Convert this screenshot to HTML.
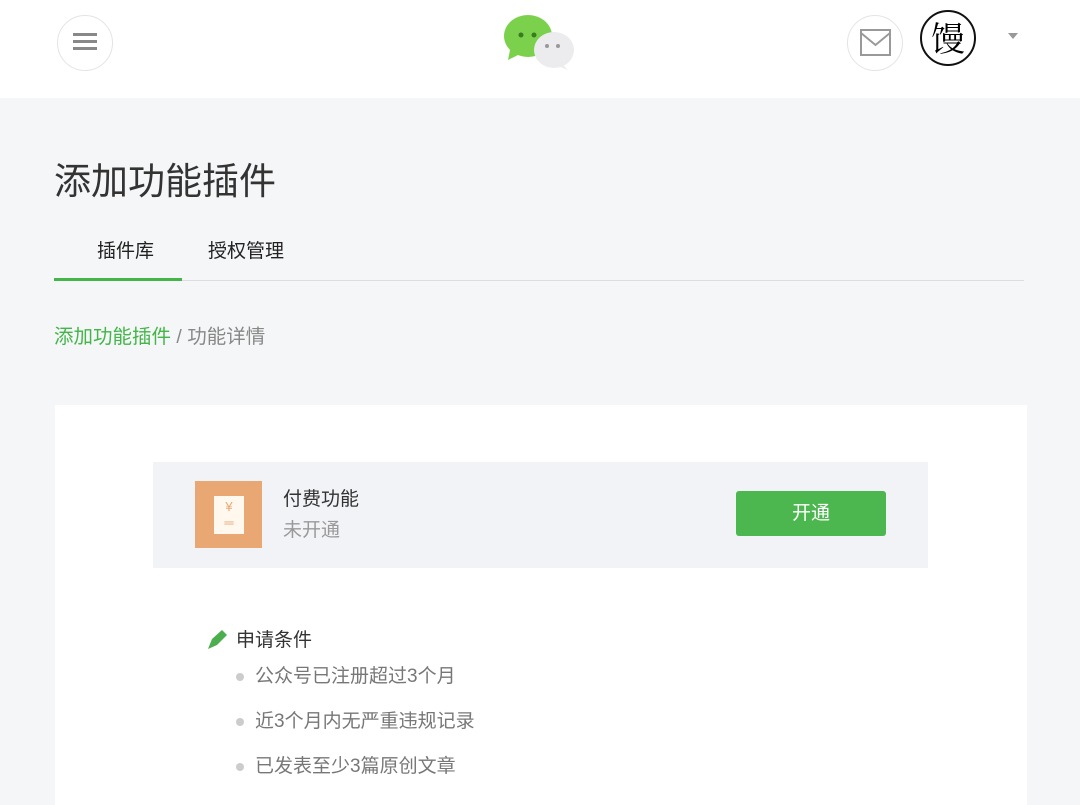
<!DOCTYPE html>
<html><head><meta charset="utf-8"><style>
*{margin:0;padding:0;box-sizing:border-box}
body{width:1080px;height:800px;overflow:hidden;background:#f5f6f7;font-family:"Liberation Sans","Noto Sans CJK SC",sans-serif;position:relative}
.a{position:absolute}
.hdr{left:0;top:0;width:1080px;height:98px;background:#fff}
.circ{border:1px solid #e4e4e4;border-radius:50%;background:#fff}
.b{display:inline-block;width:8px;height:8px;border-radius:50%;background:#ccc;margin-right:11px;vertical-align:middle}
</style></head><body>
<div class="a hdr"></div>
<div class="a circ" style="left:57px;top:15px;width:56px;height:56px"></div>
<div class="a" style="left:73px;top:33px;width:24px;height:3px;background:#888;box-shadow:0 7px 0 #888,0 14px 0 #888"></div>
<svg class="a" style="left:500px;top:12px" width="80" height="60">
<ellipse cx="28" cy="24" rx="24" ry="21" fill="#7bd14c"/><path d="M10 38 L8 48 L20 42Z" fill="#7bd14c"/>
<circle cx="21" cy="23" r="2.5" fill="#3a7a22"/><circle cx="34" cy="23" r="2.5" fill="#3a7a22"/>
<ellipse cx="54" cy="38" rx="20" ry="18" fill="#ececee"/><path d="M62 52 L68 58 L58 54Z" fill="#ececee"/>
<circle cx="47" cy="34" r="2" fill="#999"/><circle cx="58" cy="34" r="2" fill="#999"/></svg>
<div class="a circ" style="left:847px;top:15px;width:56px;height:56px"></div>
<svg class="a" style="left:860px;top:29px" width="32" height="28"><rect x="1" y="1" width="29" height="25" fill="none" stroke="#999" stroke-width="2"/><path d="M1 4 L15.5 16 L30 4" fill="none" stroke="#999" stroke-width="2"/></svg>
<div class="a" style="left:920px;top:10px;width:56px;height:56px;border:2px solid #111;border-radius:50%;font-family:'Noto Serif CJK SC',serif;font-size:34px;line-height:50px;text-align:center;color:#000">馒</div>
<div class="a" style="left:1008px;top:33px;border-left:5px solid transparent;border-right:5px solid transparent;border-top:6px solid #999"></div>
<div class="a" style="left:54px;top:151px;font-size:37px;color:#333">添加功能插件</div>
<div class="a" style="left:97px;top:236px;font-size:19px;color:#222">插件库</div>
<div class="a" style="left:208px;top:236px;font-size:19px;color:#222">授权管理</div>
<div class="a" style="left:54px;top:280px;width:970px;height:1px;background:#ddd"></div>
<div class="a" style="left:54px;top:278px;width:128px;height:3px;background:#44b549"></div>
<div class="a" style="left:54px;top:320px;font-size:19.5px;color:#888"><span style="color:#44b549">添加功能插件</span> / 功能详情</div>
<div class="a" style="left:55px;top:405px;width:972px;height:400px;background:#fff"></div>
<div class="a" style="left:153px;top:462px;width:775px;height:106px;background:#f2f3f7"></div>
<div class="a" style="left:195px;top:481px;width:67px;height:67px;background:#e9a774"></div>
<div class="a" style="left:214px;top:496px;width:30px;height:38px;background:#fff8ef;color:#e9a774;font-size:13px;text-align:center;line-height:16px;padding-top:3px">¥<br>═</div>
<div class="a" style="left:283px;top:484px;font-size:19px;color:#333">付费功能</div>
<div class="a" style="left:283px;top:515px;font-size:19px;color:#999">未开通</div>
<div class="a" style="left:736px;top:491px;width:150px;height:45px;background:#4cb64f;border-radius:3px;color:#fff;font-size:19px;text-align:center;line-height:45px">开通</div>
<svg class="a" style="left:205px;top:627px" width="24" height="24"><path d="M3 22 L7 12 L17 3 L22 8 L12 18Z" fill="#4cae4c"/></svg>
<div class="a" style="left:236px;top:625px;font-size:19px;color:#333">申请条件</div>
<div class="a" style="left:236px;top:654px;font-size:19px;color:#777;line-height:45px">
<div><span class="b"></span>公众号已注册超过3个月</div>
<div><span class="b"></span>近3个月内无严重违规记录</div>
<div><span class="b"></span>已发表至少3篇原创文章</div>
</div>
</body></html>
